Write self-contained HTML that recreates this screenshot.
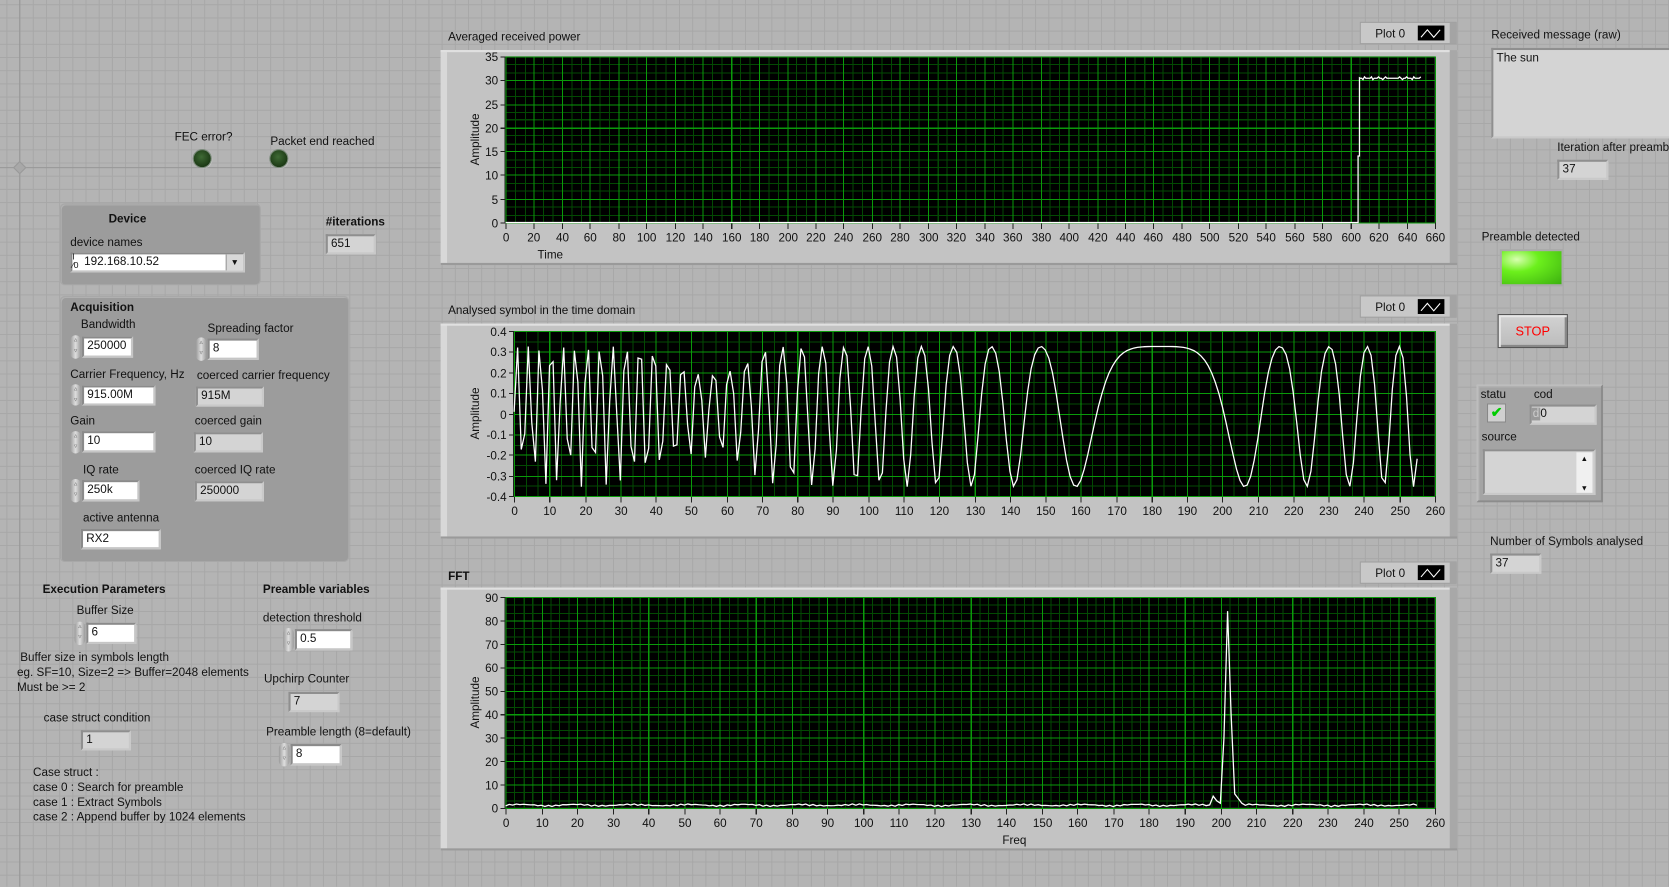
<!DOCTYPE html>
<html><head><meta charset="utf-8">
<style>
html,body{margin:0;padding:0;width:1669px;height:887px;overflow:hidden;background:#b4b4b4;}
#root{position:absolute;left:0;top:0;width:1568px;height:833px;transform:scale(1.06441);transform-origin:0 0;
font-family:"Liberation Sans",Arial,sans-serif;font-size:11px;color:#111;
background-color:#b4b4b4;
background-image:linear-gradient(#a7a7a7 1px,transparent 1px),linear-gradient(90deg,#a7a7a7 1px,transparent 1px);
background-size:12.4px 12.4px;background-position:6px 4px;}
.a{position:absolute;white-space:nowrap;}
.b{font-weight:bold;}
.panel{position:absolute;background:#9c9c9c;border-radius:5px;border:1px solid #a8a8a8;box-shadow:inset 1px 1px 0 #b0b0b0;}
.ctl{position:absolute;background:#fff;border:2px solid #8a8a8a;border-right-color:#c6c6c6;border-bottom-color:#c6c6c6;box-sizing:border-box;padding-left:3px;line-height:15px;font-size:11px;}
.ind{position:absolute;background:#d4d4d4;border:2px solid #8f8f8f;border-right-color:#c9c9c9;border-bottom-color:#c9c9c9;box-sizing:border-box;padding-left:3px;line-height:15px;font-size:11px;}
.spin{position:absolute;width:10px;border-radius:5px;background:linear-gradient(90deg,#9a9a9a,#dedede,#9a9a9a);font-size:6px;line-height:10px;text-align:center;color:#666;}
.led{position:absolute;width:16px;height:16px;border-radius:50%;background:radial-gradient(circle at 45% 40%,#3f6a35,#1c3a15 70%);box-shadow:0 0 0 1px #7a8a7a,1px 1px 1px #ddd;}
</style></head><body><div id="root">
<div class="a" style="left:18px;top:0;width:1px;height:833px;background:#989898"></div>
<div class="a" style="left:0;top:157px;width:414px;height:1px;background:#989898"></div>
<div class="a" style="left:14px;top:153px;width:7px;height:7px;background:#a8a8a8;border:1px solid #999;transform:rotate(45deg)"></div>

<div class="a" style="left:164px;top:123px">FEC error?</div>
<div class="led" style="left:182px;top:141px"></div>
<div class="a" style="left:254px;top:127px">Packet end reached</div>
<div class="led" style="left:254px;top:141px"></div>

<div class="panel" style="left:56px;top:191px;width:187px;height:75px"></div>
<div class="a b" style="left:102px;top:200px">Device</div>
<div class="a" style="left:66px;top:222px">device names</div>
<div class="ctl" style="left:66px;top:237px;width:164px;height:19px;padding-left:11px">192.168.10.52</div>
<div class="a" style="left:68px;top:238px;font-size:8px;line-height:8px">I<br>⁄0</div>
<div class="a" style="left:212px;top:239px;width:15px;height:15px;background:#d8d8d8;border-left:1px solid #999;font-size:8px;text-align:center;line-height:15px">▼</div>
<div class="a b" style="left:306px;top:203px">#iterations</div>
<div class="ind" style="left:306px;top:220px;width:47px;height:19px">651</div>

<div class="panel" style="left:56px;top:278px;width:270px;height:248px"></div>
<div class="a b" style="left:66px;top:283px">Acquisition</div>
<div class="a" style="left:76px;top:299px">Bandwidth</div>
<div class="spin" style="left:66px;top:315px;height:22px">▵<br>▿</div><div class="ctl" style="left:77px;top:316px;width:48px;height:20px">250000</div>
<div class="a" style="left:195px;top:303px">Spreading factor</div>
<div class="spin" style="left:184px;top:317px;height:22px">▵<br>▿</div><div class="ctl" style="left:195px;top:318px;width:48px;height:20px">8</div>
<div class="a" style="left:66px;top:346px">Carrier Frequency, Hz</div>
<div class="spin" style="left:66px;top:361px;height:20px">▵<br>▿</div><div class="ctl" style="left:77px;top:362px;width:69px;height:19px">915.00M</div>
<div class="a" style="left:185px;top:347px">coerced carrier frequency</div>
<div class="ind" style="left:184px;top:363px;width:64px;height:19px">915M</div>
<div class="a" style="left:66px;top:390px">Gain</div>
<div class="spin" style="left:66px;top:405px;height:21px">▵<br>▿</div><div class="ctl" style="left:77px;top:405px;width:69px;height:20px">10</div>
<div class="a" style="left:183px;top:390px">coerced gain</div>
<div class="ind" style="left:182px;top:406px;width:65px;height:19px">10</div>
<div class="a" style="left:78px;top:436px">IQ rate</div>
<div class="spin" style="left:66px;top:450px;height:22px">▵<br>▿</div><div class="ctl" style="left:77px;top:451px;width:54px;height:20px">250k</div>
<div class="a" style="left:183px;top:436px">coerced IQ rate</div>
<div class="ind" style="left:183px;top:452px;width:65px;height:19px">250000</div>
<div class="a" style="left:78px;top:481px">active antenna</div>
<div class="ctl" style="left:76px;top:497px;width:75px;height:19px">RX2</div>

<div class="a b" style="left:40px;top:548px">Execution Parameters</div>
<div class="a" style="left:72px;top:568px">Buffer Size</div>
<div class="spin" style="left:70px;top:584px;height:22px">▵<br>▿</div><div class="ctl" style="left:81px;top:585px;width:47px;height:20px">6</div>
<div class="a" style="left:19px;top:612px">Buffer size in symbols length</div>
<div class="a" style="left:16px;top:626px">eg. SF=10, Size=2 =&gt; Buffer=2048 elements</div>
<div class="a" style="left:16px;top:640px">Must be &gt;= 2</div>
<div class="a" style="left:41px;top:669px">case struct condition</div>
<div class="ind" style="left:76px;top:686px;width:47px;height:19px">1</div>
<div class="a" style="left:31px;top:720px">Case struct :</div>
<div class="a" style="left:31px;top:734px">case 0 : Search for preamble</div>
<div class="a" style="left:31px;top:748px">case 1 : Extract Symbols</div>
<div class="a" style="left:31px;top:762px">case 2 : Append buffer by 1024 elements</div>

<div class="a b" style="left:247px;top:548px">Preamble variables</div>
<div class="a" style="left:247px;top:575px">detection threshold</div>
<div class="spin" style="left:266px;top:590px;height:22px">▵<br>▿</div><div class="ctl" style="left:277px;top:591px;width:54px;height:20px">0.5</div>
<div class="a" style="left:248px;top:632px">Upchirp Counter</div>
<div class="ind" style="left:271px;top:650px;width:48px;height:19px">7</div>
<div class="a" style="left:250px;top:682px">Preamble length (8=default)</div>
<div class="spin" style="left:262px;top:698px;height:22px">▵<br>▿</div><div class="ctl" style="left:273px;top:699px;width:48px;height:20px">8</div>

<div class="a" style="left:1401px;top:27px">Received message (raw)</div>
<div class="ind" style="left:1401px;top:45px;width:180px;height:85px;line-height:16px">The sun</div>
<div class="a" style="left:1463px;top:133px">Iteration after preamble</div>
<div class="ind" style="left:1463px;top:150px;width:48px;height:19px">37</div>
<div class="a" style="left:1392px;top:217px">Preamble detected</div>
<div class="a" style="left:1409px;top:234px;width:60px;height:35px;background:#aaa;"></div>
<div class="a" style="left:1411px;top:236px;width:56px;height:31px;background:radial-gradient(ellipse at 25% 25%,#d8ffb0,#6cf01c 35%,#3cb010 100%)"></div>
<div class="a" style="left:1407px;top:295px;width:66px;height:32px;box-sizing:border-box;border:1px solid #555;background:linear-gradient(#d2d2d2,#bcbcbc);box-shadow:inset 2px 2px 0 #e6e6e6,inset -2px -2px 0 #888;color:#f00;text-align:center;line-height:30px;font-size:12px">STOP</div>
<div class="panel" style="left:1387px;top:361px;width:115px;height:107px;border-radius:1px;background:#a4a4a4;border:2px solid #bdbdbd;border-right-color:#8c8c8c;border-bottom-color:#8c8c8c"></div>
<div class="a" style="left:1391px;top:365px">statu</div>
<div class="a" style="left:1441px;top:365px">cod</div>
<div class="a" style="left:1397px;top:379px;width:18px;height:18px;box-sizing:border-box;background:#d0d0d0;border:1px solid #888;color:#0c0;font-size:13px;line-height:16px;text-align:center;font-weight:bold">✔</div>
<div class="ind" style="left:1437px;top:380px;width:63px;height:19px;padding-left:0"><span style="background:#999;color:#ccc;padding:0 1px">d</span>0</div>
<div class="a" style="left:1392px;top:405px">source</div>
<div class="ind" style="left:1393px;top:422px;width:106px;height:43px"></div>
<div class="a" style="left:1481px;top:425px;width:15px;height:38px;background:#f0f0f0;font-size:7px;text-align:center;line-height:14px">▲<br><br>▼</div>
<div class="a" style="left:1400px;top:503px">Number of Symbols analysed</div>
<div class="ind" style="left:1400px;top:520px;width:48px;height:19px">37</div>

<svg id="g" class="a" style="left:0;top:0" width="1568" height="833" xmlns="http://www.w3.org/2000/svg"></svg>
</div>
<script>
var S=document.getElementById('g'),out='';
function r(x,y,w,h,f,extra){out+='<rect x="'+x+'" y="'+y+'" width="'+w+'" height="'+h+'" fill="'+f+'" '+(extra||'')+'/>';}
function t(x,y,s,anchor,extra){out+='<text x="'+x+'" y="'+y+'" font-family="Liberation Sans,Arial,sans-serif" font-size="11" fill="#111" text-anchor="'+(anchor||'start')+'" '+(extra||'')+'>'+s+'</text>';}
function ln(x1,y1,x2,y2,c,w){out+='<line x1="'+x1+'" y1="'+y1+'" x2="'+x2+'" y2="'+y2+'" stroke="'+c+'" stroke-width="'+(w||1)+'" shape-rendering="crispEdges"/>';}
function graph(o){
 r(o.fx,o.fy,o.fw,o.fh,'#c3c3c3');
 r(o.fx,o.fy,6,o.fh,'#d8d8d8');r(o.fx,o.fy,o.fw,2,'#e0e0e0');
 r(o.fx+o.fw-7,o.fy,7,o.fh,'#a8a8a8');r(o.fx,o.fy+o.fh-2,o.fw,2,'#9a9a9a');
 var ly=o.ly;r(1278,ly,90,20,'#c8c8c8','stroke="#a0a0a0"');r(1362,ly,6,20,'#a4a4a4');
 t(1292,ly+14,'Plot 0');r(1332,ly+3,25,14,'#000');
 out+='<polyline points="1335,14 1341,7 1347,14 1353,7" transform="translate(0,'+(ly)+')" fill="none" stroke="#fff" stroke-width="1"/>';
 var px=o.px,py=o.py,pw=o.pw,ph=o.ph;
 r(px,py,pw,ph,'#000');
 function X(v){return px+(v-o.x0)/(o.x1-o.x0)*pw;}
 function Y(v){return py+ph-(v-o.y0)/(o.y1-o.y0)*ph;}
 var v,s;
 for(v=o.x0;v<=o.x1+1e-9;v+=o.xs/o.xm){ln(Math.round(X(v))+.5,py,Math.round(X(v))+.5,py+ph,'#034a03');}
 for(v=o.y0;v<=o.y1+1e-9;v+=o.ys/o.ym){ln(px,Math.round(Y(v))+.5,px+pw,Math.round(Y(v))+.5,'#034a03');}
 for(v=o.x0;v<=o.x1+1e-9;v+=o.xs){var xx=Math.round(X(v))+.5;ln(xx,py,xx,py+ph,'#0a9a0a');ln(xx,py+ph,xx,py+ph+6,'#222');t(xx,py+ph+18,Math.round(v),'middle');}
 for(v=o.y0;v<=o.y1+1e-9;v+=o.ys){var yy=Math.round(Y(v))+.5;ln(px,yy,px+pw,yy,'#0a9a0a');ln(px-5,yy,px,yy,'#222');s=(Math.round(v*10)/10).toString();t(px-7,yy+4,s,'end');}
 ln(px-0.5,py,px-0.5,py+ph,'#222');
 t(0,0,'Amplitude','middle','transform="translate('+(o.ax)+','+(py+ph/2)+') rotate(-90)"');
 if(o.xl)t(o.xlx,o.xly,o.xl,o.xla||'start');
 var p=o.data.map(function(d){return X(d[0]).toFixed(1)+','+Y(d[1]).toFixed(1);}).join(' ');
 out+='<polyline points="'+p+'" fill="none" stroke="#fff" stroke-width="1.2"/>';
}
var d1=[];for(var i=0;i<=605;i+=5)d1.push([i,0]);d1.push([605.5,0]);d1.push([605.5,14]);d1.push([606.5,14]);d1.push([606.5,30.5]);
for(i=607;i<=650;i++)d1.push([i,30.4+((i*7)%5==0?0.3:0)-((i*3)%7==0?0.3:0)]);
t(421,38,'Averaged received power');
graph({fx:414,fy:47,fw:955,fh:202,ly:21,px:475,py:53,pw:873,ph:156,x0:0,x1:660,xs:20,xm:3,y0:0,y1:35,ys:5,ym:3,ax:450,xl:'Time',xlx:505,xly:243,data:d1});
// data 2: chirp with phase 0 at n=182
var phs=[],acc=0;for(i=0;i<=255;i++){var f=Math.abs(i-182)/182*0.32;phs.push(acc);acc+=2*Math.PI*f;}
var ref=phs[182],d2=[];
for(i=0;i<=255;i++){var ph=phs[i]-ref;var a=0.34;if(i>38&&i<72)a=0.34-0.14*Math.sin((i-38)/34*Math.PI);
 var y=a*Math.cos(ph)-0.045*Math.cos(2*ph)+0.03;d2.push([i,Math.max(-0.39,Math.min(0.38,y))]);}
t(421,295,'Analysed symbol in the time domain');
graph({fx:414,fy:304,fw:955,fh:202,ly:278,px:483,py:311,pw:865,ph:155,x0:0,x1:260,xs:10,xm:3,y0:-0.4,y1:0.4,ys:0.1,ym:2,ax:450,data:d2});
var d3=[];for(i=0;i<=255;i++){var y=0.8+0.6*Math.abs(Math.sin(i*1.7))+0.3*Math.sin(i*0.4);
 if(i==198)y=5;if(i==199)y=3;if(i==200)y=2;if(i==201)y=30;if(i==202)y=84;if(i==203)y=40;if(i==204)y=6;if(i==205)y=4;if(i==206)y=2;d3.push([i,y]);}
t(421,545,'FFT','start','font-weight="bold"');
graph({fx:414,fy:552,fw:955,fh:247,ly:528,px:475,py:561,pw:873,ph:198,x0:0,x1:260,xs:10,xm:4,y0:0,y1:90,ys:10,ym:3,ax:450,xl:'Freq',xlx:953,xly:793,xla:'middle',data:d3});
S.innerHTML=out;
</script>
</body></html>
